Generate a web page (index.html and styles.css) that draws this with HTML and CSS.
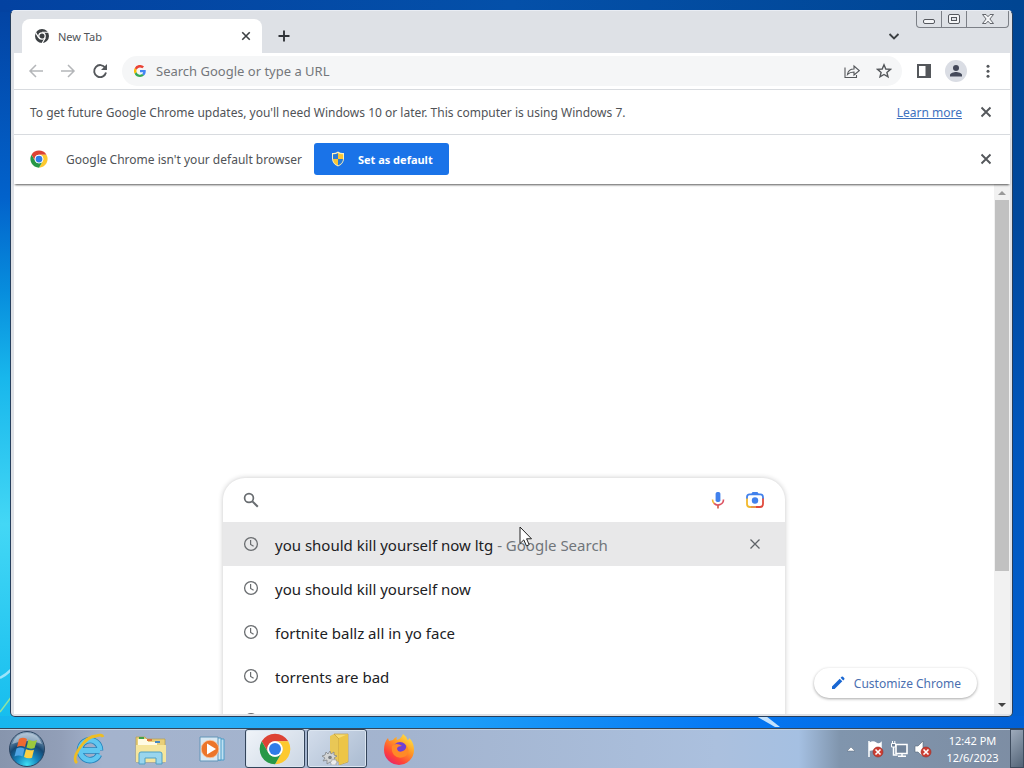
FILE: index.html
```html
<!DOCTYPE html>
<html lang="en">
<head>
<meta charset="utf-8">
<title>New Tab</title>
<link rel="stylesheet" href="styles.css">
</head>
<body class="screen">
<svg class="symbols" aria-hidden="true">
  <symbol id="clock" viewBox="0 0 16 16"><circle cx="8" cy="8" r="6.400" fill="none" stroke="currentColor" stroke-width="1.300"/><path d="M7.600 4v4.400l3 1.800" fill="none" stroke="currentColor" stroke-width="1.200"/></symbol>
  <symbol id="cross" viewBox="0 0 12 12"><path d="M1.500 1.500l9 9M10.500 1.500l-9 9" fill="none" stroke="currentColor" stroke-width="1.900"/></symbol>
  <symbol id="cross-thin" viewBox="0 0 12 12"><path d="M1.500 1.500l9 9M10.500 1.500l-9 9" fill="none" stroke="currentColor" stroke-width="1.300"/></symbol>
  <symbol id="chrome" viewBox="0 0 48 48">
    <path d="M4.100 12.500A23 23 0 0 1 43.900 12.500H24A11.500 11.500 0 0 0 14 29.700z" fill="#dd4335"/>
    <path d="M43.900 12.500A23 23 0 0 1 24 47L34 29.700A11.500 11.500 0 0 0 24 12.500z" fill="#fdc92f"/>
    <path d="M24 47A23 23 0 0 1 4.100 12.500L14 29.700A11.500 11.500 0 0 0 34 29.700z" fill="#279847"/>
    <circle cx="24" cy="24" r="11.500" fill="#fff"/><circle cx="24" cy="24" r="9" fill="#2f7ce8"/>
  </symbol>
</svg>
<div class="desktop">
  <svg class="streaks streaks-left" viewBox="0 0 12 60" aria-hidden="true"><path d="M0 18Q6 15 12 9" stroke="#9be4fb" stroke-width="2.500" fill="none"/><path d="M0 52L12 36" stroke="#8fe3a0" stroke-width="1.500" fill="none"/></svg>
  <svg class="streaks streaks-bottom" viewBox="0 0 50 12" aria-hidden="true"><path d="M8 0h10l14 11h-5z" fill="#e4f5ff" opacity=".85"/></svg>
  <main class="window">
    <header class="tabstrip">
      <div class="tab">
        <svg class="tab-icon" viewBox="0 0 16 16" aria-hidden="true"><circle cx="8" cy="8" r="7" fill="#3c4043"/><path d="M8 4.300h6.200M4.800 9.900L1.700 4.600M11.200 9.900L8.100 15.200" stroke="#fff" stroke-width="1.100"/><circle cx="8" cy="8" r="3.200" fill="#3c4043" stroke="#fff" stroke-width="1.300"/></svg>
        <span class="tab-title">New Tab</span>
        <button class="tab-close" aria-label="Close tab"><svg class="i10"><use href="#cross"/></svg></button>
      </div>
      <button class="strip-btn" aria-label="New tab"><svg class="i16" viewBox="0 0 16 16"><path d="M8 2.500v11M2.500 8h11" stroke="#303338" stroke-width="1.900"/></svg></button>
      <span class="spacer"></span>
      <button class="strip-btn" aria-label="Search tabs"><svg class="i16" viewBox="0 0 16 16"><path d="M3.500 6l4.500 4.500L12.500 6" fill="none" stroke="#3c4043" stroke-width="1.900"/></svg></button>
      <div class="controls">
        <button class="control" aria-label="Minimize"><svg class="i16" viewBox="0 0 16 16"><rect x="2.500" y="8.500" width="11" height="4" rx="1.500" fill="#f4f5f7" stroke="#55585e"/></svg></button>
        <button class="control" aria-label="Restore"><svg class="i16" viewBox="0 0 16 16"><rect x="2.500" y="3.500" width="11" height="9" rx="1.500" fill="#f4f5f7" stroke="#55585e"/><rect x="5.500" y="6.500" width="5" height="3" fill="#e2e4e9" stroke="#55585e"/></svg></button>
        <button class="control control-close" aria-label="Close window"><svg class="i16" viewBox="0 0 16 16"><path d="M2.500 3.500H6l2 2.200 2-2.200h3.500L9.900 8l3.600 4.500H10l-2-2.300-2 2.300H2.500L6.100 8z" fill="#f4f5f7" stroke="#55585e" stroke-width=".9"/></svg></button>
      </div>
    </header>
    <nav class="toolbar" aria-label="Browser toolbar">
      <button class="tool dim" aria-label="Back"><svg class="i16" viewBox="0 0 16 16"><path d="M15 8H2M8 2L2 8l6 6" fill="none" stroke="currentColor" stroke-width="1.500"/></svg></button>
      <button class="tool dim" aria-label="Forward"><svg class="i16" viewBox="0 0 16 16"><path d="M1 8h13M8 2l6 6-6 6" fill="none" stroke="currentColor" stroke-width="1.500"/></svg></button>
      <button class="tool" aria-label="Reload"><svg class="i16" viewBox="0 0 16 16"><path d="M13.200 4.800A6 6 0 1 0 14 9.500" fill="none" stroke="currentColor" stroke-width="1.900"/><path d="M15 1v6H9z" fill="currentColor"/></svg></button>
      <div class="omnibox">
        <svg class="g-logo" viewBox="0 0 48 48" aria-hidden="true"><path fill="#ea4335" d="M24 9.500c3.500 0 6.700 1.200 9.200 3.600l6.900-6.900A24 24 0 0 0 2.600 13.200l8 6.200C12.500 13.700 17.700 9.500 24 9.500z"/><path fill="#4285f4" d="M47 24.500c0-1.600-.2-3.100-.4-4.500H24v9h12.900a11 11 0 0 1-4.800 7.300l7.700 6c4.600-4.200 7.200-10.400 7.200-17.800z"/><path fill="#fbbc05" d="M10.500 28.600a14.500 14.500 0 0 1 0-9.200l-8-6.200a24 24 0 0 0 0 21.600z"/><path fill="#34a853" d="M24 48c6.500 0 12-2.100 15.900-5.800l-7.700-6A14.400 14.400 0 0 1 10.500 28.600l-8 6.200A24 24 0 0 0 24 48z"/></svg>
        <input class="omnibox-input" type="text" aria-label="Address" placeholder="Search Google or type a URL">
        <button class="tool" aria-label="Share"><svg class="i16" viewBox="0 0 16 16"><path d="M1 4.500v10h11.500V12M3.500 11.500C4 8 6.500 6 10 6V3l5.200 4.600L10 12V9C7.500 9 5.300 9.500 3.500 11.500z" fill="none" stroke="currentColor" stroke-width="1.100"/></svg></button>
        <button class="tool" aria-label="Bookmark"><svg class="i16" viewBox="0 0 16 16"><path d="M8 1.800l1.800 4.200 4.600.4-3.500 3 1.100 4.500L8 11.500l-4 2.400 1.100-4.500-3.500-3L6.200 6z" fill="none" stroke="currentColor" stroke-width="1.400"/></svg></button>
      </div>
      <button class="tool" aria-label="Side panel"><svg class="i16" viewBox="0 0 16 16"><rect x="2" y="2" width="12" height="12" fill="none" stroke="currentColor" stroke-width="2"/><path d="M9.500 2H14v12H9.500z" fill="currentColor"/></svg></button>
      <button class="tool" aria-label="Profile"><svg class="i22" viewBox="0 0 22 22"><circle cx="11" cy="11" r="11" fill="#dadde4"/><circle cx="11" cy="8" r="3" fill="#44495a"/><path d="M5 16.500V15c0-2 4-3 6-3s6 1 6 3v1.500z" fill="#44495a"/></svg></button>
      <button class="tool" aria-label="Menu"><svg class="i16" viewBox="0 0 16 16"><g fill="currentColor"><circle cx="8" cy="3.200" r="1.500"/><circle cx="8" cy="8.200" r="1.500"/><circle cx="8" cy="13.200" r="1.500"/></g></svg></button>
    </nav>
    <section class="infobar">
      <p class="info-text">To get future Google Chrome updates, you'll need Windows 10 or later. This computer is using Windows 7.</p>
      <span class="spacer"></span>
      <a class="learn" href="#">Learn more</a>
      <button class="tool" aria-label="Dismiss"><svg class="i12"><use href="#cross"/></svg></button>
    </section>
    <section class="infobar infobar-default">
      <svg class="i18"><use href="#chrome"/></svg>
      <p class="info-text">Google Chrome isn't your default browser</p>
      <button class="set-default">
        <svg class="i16" viewBox="0 0 16 16" aria-hidden="true"><path d="M8 .5Q11 2.500 14 2v5.500q0 5-6 8-6-3-6-8V2Q5 2.500 8 .5z" fill="#fff1b8"/><path d="M8 2v6H3V3.200Q6 3.300 8 2zM8 8h5q0 4-5 6.500z" fill="#287bd4"/><path d="M8 2q2 1.300 5 1.200V8H8zM3 8h5v6.500Q3 12 3 8z" fill="#f8c637"/></svg>
        Set as default
      </button>
      <span class="spacer"></span>
      <button class="tool" aria-label="Dismiss"><svg class="i12"><use href="#cross"/></svg></button>
    </section>
    <section class="viewport">
      <div class="page">
        <div class="searchbox">
          <div class="search-row">
            <svg class="i16" viewBox="0 0 16 16" aria-hidden="true"><circle cx="6" cy="6" r="4.400" fill="none" stroke="currentColor" stroke-width="1.700"/><path d="M9.400 9.400l5.400 5.400" stroke="currentColor" stroke-width="2"/></svg>
            <input class="search-input" type="text" aria-label="Search">
            <button class="icon-btn" aria-label="Search by voice"><svg class="i20" viewBox="0 0 20 20"><rect x="7.600" y="2" width="4.800" height="10" rx="1.800" fill="#4181ec"/><path d="M4.500 9.500A5.500 5.500 0 0 0 6.300 13.600" fill="none" stroke="#f2b735" stroke-width="1.600"/><path d="M6.100 13.400A5.500 5.500 0 0 0 15.500 9.500" fill="none" stroke="#dc5362" stroke-width="1.600"/><path d="M10 15v3.500" stroke="#d86050" stroke-width="1.700"/></svg></button>
            <button class="icon-btn" aria-label="Search by image"><svg class="i20" viewBox="0 0 20 20"><g fill="none" stroke-width="1.800"><path d="M2 9V7q0-2.600 2.600-2.600h10.800Q18 4.400 18 7v2" stroke="#4181ec"/><path d="M18 8.500v5.500q0 3-3 3h-4" stroke="#e04b3e"/><path d="M2 8.500V14q0 3 3 3h1" stroke="#f2b92d"/><path d="M6 17h5" stroke="#e58a38"/></g><path d="M6 4.500L7.500 2h5L14 4.500z" fill="#4181ec"/><circle cx="10" cy="10.500" r="3.200" fill="#4181ec"/></svg></button>
          </div>
          <ul class="suggestions">
            <li class="suggestion selected"><svg class="i16"><use href="#clock"/></svg><span class="phrase">you should kill yourself now ltg <span class="hint">- Google Search</span></span><button class="icon-btn" aria-label="Remove"><svg class="i12"><use href="#cross-thin"/></svg></button></li>
            <li class="suggestion"><svg class="i16"><use href="#clock"/></svg><span class="phrase">you should kill yourself now</span></li>
            <li class="suggestion"><svg class="i16"><use href="#clock"/></svg><span class="phrase">fortnite ballz all in yo face</span></li>
            <li class="suggestion"><svg class="i16"><use href="#clock"/></svg><span class="phrase">torrents are bad</span></li>
            <li class="suggestion"><svg class="i16"><use href="#clock"/></svg></li>
          </ul>
        </div>
        <button class="customize"><svg class="i16" viewBox="0 0 16 16" aria-hidden="true"><path d="M2 11.400V14h2.600l7.700-7.700-2.600-2.600zM10.600 2.800l2.600 2.600 1-1q.7-.7 0-1.400l-1.200-1.200q-.7-.7-1.400 0z" fill="#1967d2"/></svg>Customize Chrome</button>
      </div>
      <div class="scrollbar" aria-hidden="true">
        <svg class="arrow" viewBox="0 0 16 16"><path d="M4 11l4-4 4 4z" fill="#9a9a9a"/></svg>
        <div class="thumb"></div>
        <svg class="arrow" viewBox="0 0 16 16"><path d="M4 5l4 4 4-4z" fill="#444"/></svg>
      </div>
    </section>
  </main>
  <svg class="cursor" viewBox="0 0 14 22" aria-hidden="true"><path d="M1 1v16.500l3.800-3.600 2.600 6 2.800-1.200-2.600-5.900H12.500z" fill="#fff" stroke="#222"/></svg>
</div>
<footer class="taskbar">
  <button class="start" aria-label="Start"><svg class="i38" viewBox="0 0 38 38"><defs><radialGradient id="orb" cx=".5" cy=".95" r=".9"><stop offset="0" stop-color="#3fe0f4"/><stop offset=".35" stop-color="#1585bd"/><stop offset=".65" stop-color="#164873"/><stop offset="1" stop-color="#8ba5bd"/></radialGradient></defs><circle cx="19" cy="19" r="17.500" fill="url(#orb)" stroke="#2c4562"/><path d="M4 14Q8 3 19 3t15 11Q19 8 4 14z" fill="#dce8f2" opacity=".5"/><path d="M11 9q4-2.500 8 0l-2 8q-4-2-8 0z" fill="#ee6a31"/><path d="M20.500 9.500q4 2.500 8.500.5l-2.500 8q-4 1.500-8-.5z" fill="#9cc93e"/><path d="M8.500 18.500q4-2 8 .3l-2 7.700q-4-2-8 0z" fill="#4fa4e4"/><path d="M18 19.200q4 2 8 .5l-2 8q-4 1.500-8-.7z" fill="#fbd043"/></svg></button>
  <button class="task" aria-label="Internet Explorer"><svg class="i32" viewBox="0 0 32 32"><path d="M7 17.500H26.500M26 21.500A10 10 0 1 1 27 17.500" fill="none" stroke="#2785bd" stroke-width="6.500"/><path d="M7 17.500H27M26 21.500A10 10 0 1 1 27 17" fill="none" stroke="#60c7f0" stroke-width="4.800"/><path d="M4 30Q-1 26 7 14.500T23 3q6-2 7 1" fill="none" stroke="#edbd25" stroke-width="2.800"/></svg></button>
  <button class="task" aria-label="Windows Explorer"><svg class="i32" viewBox="0 0 32 32"><path d="M1 4h9l2 2h18v23H1z" fill="#e8cf79" stroke="#b99d4b" stroke-width=".7"/><path d="M3 6h10v3h9v3h8v4H3z" fill="#fffbe3"/><path d="M4 4h5v2H4z" fill="#41a04a"/><path d="M12 6h5v2h-5z" fill="#dd763b"/><path d="M20 8h5v2h-5z" fill="#4789bf"/><path d="M1 12h30v17H1z" fill="#f5e59c"/><path d="M4 31V21q0-2 2-2h19q2 0 2 2v10h-6v-6H10v6z" fill="#99d5ed" stroke="#4f9fc4"/></svg></button>
  <button class="task" aria-label="Media Player"><svg class="i32" viewBox="0 0 32 32"><path d="M9 6h18v21H9z" fill="#bfe0f1" stroke="#4d9dc9"/><path d="M6 5h18v22H6z" fill="#d4eaf5" stroke="#4d9dc9"/><path d="M3 4h18v24H3z" fill="#d8e8f3" stroke="#6295b8"/><circle cx="13" cy="16" r="8.800" fill="#ec752a" stroke="#f8c5a0" stroke-width=".8"/><path d="M10 10.500v11L19 16z" fill="#fff"/></svg></button>
  <button class="task open active" aria-label="Google Chrome"><svg class="i32"><use href="#chrome"/></svg></button>
  <button class="task open" aria-label="Folder"><svg class="i32" viewBox="0 0 32 32"><path d="M9 3l4-2 5 3v25l-9-2z" fill="#e9c756"/><path d="M13 1h14v28l-9 3V6z" fill="#f7dc72" stroke="#b9922f" stroke-width=".6"/><path d="M18 5l9-4v27l-9 4z" fill="#edc546"/><path d="M5 19l2 2 2-3 1 3 3-2v3l3 1-3 2 2 3-3-1v4l-3-2-3 2v-4l-4 1 2-3-3-2 3-1z" fill="#d3d5d6" stroke="#83878a" stroke-width=".8"/><circle cx="9" cy="24.500" r="1.800" fill="#777c80"/><path d="M11 26l2 1 2-1v2l2 1-2 1v2h-5v-2l-1-1 2-1z" fill="#eceded" stroke="#999" stroke-width=".6"/></svg></button>
  <button class="task" aria-label="Firefox"><svg class="i32" viewBox="0 0 32 32"><defs><linearGradient id="fox" x1=".9" y1="0" x2=".2" y2="1"><stop offset="0" stop-color="#fff04c"/><stop offset=".4" stop-color="#ff9a24"/><stop offset=".75" stop-color="#ff4338"/><stop offset="1" stop-color="#e41f72"/></linearGradient></defs><path d="M20 1q3 2 4.500 6 2-.5 2-2Q31 10 31 17A15 15 0 0 1 1 17Q1 9 5 5l1 3 4-1Q12 4 14 4q-1 2 0 3 4-1 6-6z" fill="url(#fox)"/><circle cx="17" cy="16" r="7" fill="#7140d5"/><path d="M9 13q4-4 10 0-5 0-5 3 1 4 6 2 4-2 3-6 5 6 0 11-7 4-12-1-3-4-2-9z" fill="#ff8a27"/></svg></button>
  <span class="spacer"></span>
  <div class="tray">
    <button class="tray-btn" aria-label="Show hidden icons"><svg class="i16" viewBox="0 0 16 16"><path d="M4 10l4-4 4 4z" fill="#fff" stroke="#5b6b7d" stroke-width=".5"/></svg></button>
    <button class="tray-btn" aria-label="Action Center"><svg class="i18" viewBox="0 0 18 18"><path d="M3 1v16M4 3q3-2 6 0t5 0v7q-3 1-5 0t-6 0z" fill="#fff" stroke="#fff" stroke-width="1.500"/><circle cx="12" cy="12" r="5" fill="#cd3d32" stroke="#9b2b25" stroke-width=".6"/><path d="M9.500 9.500l5 5M14.500 9.500l-5 5" stroke="#fff" stroke-width="1.600"/></svg></button>
    <button class="tray-btn" aria-label="Network"><svg class="i18" viewBox="0 0 18 18"><path d="M6 4.500h11v9H6z" fill="#71839a" stroke="#fff" stroke-width="1.600"/><path d="M8 16.200h8M12 13v3M3.500 7v8h4" stroke="#fff" stroke-width="1.500" fill="none"/><path d="M1.500 3.500h4V7h-4zM2.500 1v3M4.800 1v3" fill="#71839a" stroke="#fff"/></svg></button>
    <button class="tray-btn" aria-label="Volume muted"><svg class="i18" viewBox="0 0 18 18"><path d="M1 6h3l5-5v16l-5-5H1z" fill="#fff" stroke="#58687b" stroke-width=".6"/><circle cx="12" cy="12" r="5" fill="#cd3d32" stroke="#9b2b25" stroke-width=".6"/><path d="M9.500 9.500l5 5M14.500 9.500l-5 5" stroke="#fff" stroke-width="1.600"/></svg></button>
  </div>
  <time class="clock" datetime="2023-12-06T12:42"><span>12:42 PM</span><span>12/6/2023</span></time>
  <button class="peek" aria-label="Show desktop"></button>
</footer>
</body>
</html>
```
FILE: styles.css
```css
* { box-sizing: border-box; }
button, input { font: inherit; color: inherit; border: 0; background: none; padding: 0; margin: 0; outline: 0; }
button { display: flex; align-items: center; justify-content: center; }
svg { display: block; flex: none; }
p, ul { margin: 0; padding: 0; }
.symbols { position: absolute; width: 0; height: 0; }
.i10 { width: 10px; height: 10px; }
.i12 { width: 12px; height: 12px; }
.i16 { width: 16px; height: 16px; }
.i18 { width: 18px; height: 18px; }
.i20 { width: 20px; height: 20px; }
.i22 { width: 22px; height: 22px; }
.i32 { width: 32px; height: 32px; }
.i38 { width: 38px; height: 38px; }
.spacer { flex: 1; }

.screen { margin: 0; height: 100vh; display: flex; flex-direction: column; overflow: hidden; font-family: "Noto Sans", "Open Sans", sans-serif; font-size: 12px; color: #505357; }
.desktop {
  position: relative; flex: 1; min-height: 0; display: flex; padding: 10px 11px 11px 10px;
  background:
    linear-gradient(to right, #17b6ee, #27aef5 20%, #1c9ef8 45%, #0679f4 70%, #0060d6) bottom / 100% 12px no-repeat,
    linear-gradient(#004592, #00489c 30%, #0056bc 60%, #0060d2) right / 12px 100% no-repeat,
    linear-gradient(to right, #0342a1, #0450a9 50%, #004592) top / 100% 12px no-repeat,
    linear-gradient(#0342a1, #0262cb 27%, #078ddd 40%, #18b7ec 52%, #43d7f5 72%, #14bcee);
}
.streaks { position: absolute; }
.streaks-left { left: 0; bottom: 8px; width: 12px; height: 60px; }
.streaks-bottom { left: 73%; bottom: 0; width: 50px; height: 12px; }
.cursor { position: absolute; left: 519px; top: 526px; width: 14px; height: 22px; }

.window { position: relative; flex: 1; min-width: 0; display: flex; flex-direction: column; padding: 0 2px 2px 3px; border: 1px solid #263e5c; border-top-color: #e9edf4; border-radius: 5px; background: #dee1e6; overflow: hidden; }
.tabstrip { display: flex; align-items: flex-end; height: 42px; padding: 0 1px 0 8px; flex: none; }
.tab { display: flex; align-items: center; width: 240px; height: 34px; padding: 0 8px 0 12px; border-radius: 8px 8px 0 0; background: #fff; font-size: 11px; }
.tab-icon { width: 16px; height: 16px; }
.tab-title { flex: 1; padding-left: 8px; }
.tab-close { width: 16px; height: 16px; color: #3c4043; }
.strip-btn { width: 32px; height: 34px; margin-left: 6px; }
.controls { align-self: flex-start; display: flex; height: 17px; margin-left: 6px; border: 1px solid #7c8087; border-top: 0; border-radius: 0 0 4px 4px; }
.control { width: 25px; height: 16px; border-right: 1px solid #7c8087; }
.control-close { width: 41px; border-right: 0; }

.toolbar { display: flex; align-items: center; flex: none; height: 37px; padding: 0 6px 1px; background: #fff; border-bottom: 1px solid #d8dbdf; }
.tool { width: 32px; height: 30px; color: #54575b; }
.dim { color: #b4b6b9; }
.omnibox { flex: 1; display: flex; align-items: center; height: 30px; margin: 0 6px; padding: 0 2px 0 12px; border-radius: 15px; background: #f5f6f7; font-size: 13px; }
.g-logo { width: 12px; height: 12px; }
.omnibox-input { flex: 1; min-width: 0; margin-left: 10px; }
.omnibox-input::placeholder { color: #74777b; opacity: 1; }

.infobar { display: flex; align-items: center; flex: none; height: 45px; padding: 0 8px 0 16px; background: #fff; border-bottom: 1px solid #d8dbdf; }
.infobar-default { position: relative; height: 49px; padding: 0 8px 1px 16px; border-bottom: 0; box-shadow: 0 2px 2px -1px rgba(0, 0, 0, .65); gap: 12px; }
.infobar-default .info-text { padding-left: 6px; }
.learn { color: #3f72c0; margin-right: 8px; }
.set-default { height: 32px; padding: 0 16px; gap: 12px; border-radius: 3px; background: #1a73e8; color: #fff; font-size: 11px; font-weight: 700; }

.viewport { flex: 1; min-height: 0; display: flex; background: #fff; }
.page { position: relative; flex: 1; min-width: 0; overflow: hidden; padding-top: 294px; }
.searchbox { width: 562px; max-width: 100%; margin: 0 auto; border-radius: 22px 22px 0 0; box-shadow: 0 0 5px rgba(32, 33, 36, .25); background: #fff; font-size: 15px; color: #202124; }
.search-row { display: flex; align-items: center; height: 44px; padding: 0 19px 0 20px; color: #686c70; }
.search-input { flex: 1; min-width: 0; }
.icon-btn { width: 22px; height: 22px; color: #5f6368; }
.search-row .icon-btn + .icon-btn { margin-left: 15px; }
.suggestions { list-style: none; }
.suggestion { display: flex; align-items: center; height: 44px; padding: 0 19px 0 20px; }
.suggestion .i16 { color: #6a6d70; }
.phrase { flex: 1; padding: 2px 0 0 16px; }
.selected { background: #e8e8e9; }
.hint { color: #70757a; }
.customize { position: absolute; right: 17px; bottom: 16px; height: 30px; padding: 0 16px; gap: 8px; border-radius: 15px; background: #fff; box-shadow: 0 1px 3px rgba(0, 0, 0, .35); color: #4a6fb0; font-size: 12px; }
.scrollbar { display: flex; flex-direction: column; width: 16px; background: #f1f1f1; }
.arrow { width: 16px; height: 16px; }
.thumb { height: 70%; margin: 0 1px auto; background: #c1c1c1; }

.taskbar { display: flex; align-items: stretch; flex: none; height: 40px; border-top: 1px solid #33475c; box-shadow: inset 0 1px #c3d2e2; background: linear-gradient(to right, #8795ad, #929fb8 6%, #a4b3cd 10%, #a3b4cf 40%, #abc0de 70%, #a5c0e2 78%, #8095ad 82%, #7d8da3); }
.start { width: 54px; margin-right: 5px; }
.task { width: 60px; margin-right: 2px; }
.open { border: 1px solid #33445a; border-radius: 3px; background: linear-gradient(135deg, #d3ddeb, #aabbd1); box-shadow: inset 0 0 0 1px #dbe5f0; }
.active { background: linear-gradient(135deg, #f0f4f9, #cbd6e4); }
.tray { display: flex; align-items: center; }
.tray-btn { width: 24px; height: 24px; }
.clock { display: flex; flex-direction: column; align-items: center; justify-content: center; width: 75px; line-height: 17px; font-size: 11px; color: #fff; }
.peek { width: 14px; border: 1px solid #3e4c5e; background: linear-gradient(135deg, #9eabbc, #536477); }
```
